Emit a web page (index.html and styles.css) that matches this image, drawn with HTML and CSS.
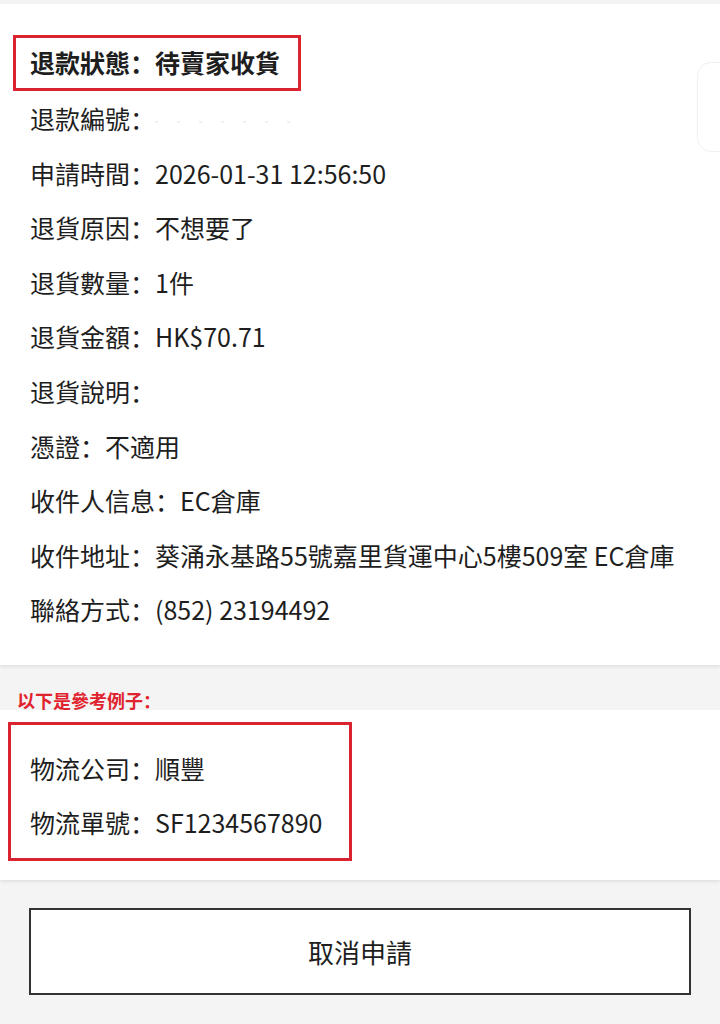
FILE: index.html
```html
<!DOCTYPE html>
<html lang="zh-CN">
<head>
<meta charset="utf-8">
<title>退款詳情</title>
<link rel="stylesheet" href="styles.css">
</head>
<body>
<div class="page">
  <div class="topstrip"></div>
  <section class="card info">
    <div class="status">退款狀態：待賣家收貨</div>
    <div class="row">退款編號：<span class="blur"></span></div>
    <div class="row">申請時間：2026-01-31 12:56:50</div>
    <div class="row">退貨原因：不想要了</div>
    <div class="row">退貨數量：1件</div>
    <div class="row">退貨金額：HK$70.71</div>
    <div class="row">退貨說明：</div>
    <div class="row">憑證：不適用</div>
    <div class="row">收件人信息：EC倉庫</div>
    <div class="row">收件地址：葵涌永基路55號嘉里貨運中心5樓509室 EC倉庫</div>
    <div class="row">聯絡方式：(852) 23194492</div>
  </section>
  <div class="note"><span class="notetext">以下是參考例子：</span></div>
  <section class="card example">
    <div class="examplebox">
      <div class="row">物流公司：順豐</div>
      <div class="row">物流單號：SF1234567890</div>
    </div>
  </section>
  <div class="actions">
    <button class="cancel">取消申請</button>
  </div>
  <div class="floater"></div>
</div>
</body>
</html>
```
FILE: styles.css
```css
html, body {
  margin: 0;
  padding: 0;
  background: #f4f4f4;
}
body {
  font-family: "Noto Sans CJK SC", "Noto Sans CJK TC", "Noto Sans", sans-serif;
  color: #1e1e1e;
  font-size: 25px;
}
.page {
  position: relative;
  width: 720px;
  height: 1024px;
  overflow: hidden;
}
.topstrip {
  height: 4px;
  background: #f4f4f4;
}
.card {
  background: #fff;
  box-shadow: 0 2px 3px rgba(0,0,0,0.08);
  position: relative;
}
.info {
  padding: 31px 0 28px 13px;
}
.status {
  display: inline-block;
  border: 3px solid #d9242f;
  padding: 3px 18px 5px 14px;
  line-height: 42px;
  font-weight: 700;
  margin-bottom: 0;
}
.row {
  line-height: 54.6px;
  height: 54.6px;
  white-space: nowrap;
}
.info .row {
  padding-left: 17px;
}
.blur {
  display: inline-block;
  width: 140px;
  height: 2px;
  vertical-align: middle;
  background: repeating-linear-gradient(90deg, #f0f0f0 0 3px, transparent 3px 22px);
}
.note {
  height: 45px;
  box-sizing: border-box;
  padding: 24px 0 0 17px;
  overflow: visible;
}
.notetext {
  display: block;
  font-size: 18px;
  line-height: 22px;
  font-weight: 700;
  color: #e0232e;
}
.example {
  padding: 12px 0 19px 8px;
}
.examplebox {
  width: 344px;
  box-sizing: border-box;
  border: 3px solid #d9242f;
  padding: 16px 0 9px 19px;
}
.examplebox .row {
  line-height: 54px;
  height: 54px;
}
.actions {
  padding: 28px 29px 0 29px;
}
.cancel {
  display: block;
  width: 100%;
  height: 87px;
  border: 2px solid #333;
  background: #fff;
  font-family: inherit;
  font-size: 26px;
  color: #1e1e1e;
  padding: 0;
  border-radius: 0;
}
.floater {
  position: absolute;
  left: 697px;
  top: 62px;
  width: 40px;
  height: 88px;
  border: 1px solid #f1f1f1;
  border-radius: 14px;
}
```
